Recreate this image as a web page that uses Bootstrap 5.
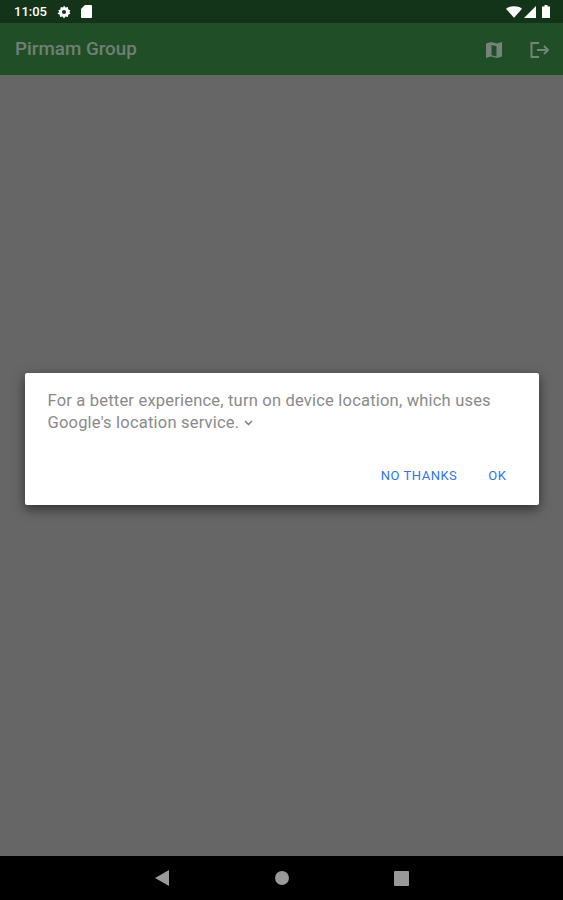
<!DOCTYPE html>
<html lang="en">
<head>
  <meta charset="UTF-8">
  <meta name="viewport" content="width=device-width, initial-scale=1.0">
  <title>Pirmam Group</title>
  <link href="https://cdn.jsdelivr.net/npm/bootstrap@5.3.0/dist/css/bootstrap.min.css" rel="stylesheet">
  <style>
    html, body { height: 100%; }
    body { font-family: Roboto, "Liberation Sans", sans-serif; background: #666666; overflow: hidden; }
    .app-frame { height: 900px; }
    .status-strip { height: 23px; background: #14341a; color: #fff; font-size: 13px; font-weight: 500; padding: 0 13px 0 14px; }
    .status-left { gap: 10px; }
    .status-right { gap: 2px; }
    .app-bar { height: 52px; background: #204f27; padding: 1px 12px 0 15px; box-shadow: 0 1px 2px rgba(0,0,0,.35); }
    .app-title { color: #717f74; font-size: 18.8px; font-weight: 500; margin: 0; }
    .bar-icons { gap: 25px; }
    .scrim-area { background: #666666; }
    .dialog-box { width: 514px; height: 132px; background: #fff; border-radius: 2px; margin-top: 298px; box-shadow: 0 4px 12px rgba(0,0,0,.55); padding: 17px 22px 0 23px; }
    .dialog-copy { color: #8a8a8a; font-size: 16.5px; line-height: 21.5px; margin: 0; letter-spacing: .2px; }
    .dialog-btn { color: #3077de; font-size: 13px; font-weight: 400; letter-spacing: .04em; background: none; border: 0; padding: 0; line-height: 16px; }
    .dialog-actions { gap: 31px; margin-top: 35px; padding-right: 10px; }
    .nav-strip { height: 44px; background: #000; }
    .nav-inner { gap: 105px; }
  </style>
</head>
<body>
  <div class="app-frame d-flex flex-column">
    <div class="status-strip d-flex align-items-center justify-content-between">
      <div class="status-left d-flex align-items-center">
        <span>11:05</span>
        <svg width="14" height="14" viewBox="0 0 24 24" fill="#fff"><path fill-rule="evenodd" d="M12 1l2.500 3.200 4-.7.9 4 3.600 2-1.800 2.500 1.800 2.500-3.600 2-.9 4-4-.7L12 23l-2.500-3.200-4 .7-.9-4-3.600-2L3.800 12 2 9.500l3.600-2 .9-4 4 .7zM12 8.500a3.500 3.500 0 1 0 0 7 3.500 3.500 0 0 0 0-7z"/></svg>
        <svg width="11" height="13" viewBox="0 0 11 13" fill="#fff"><path d="M4 0h6a1 1 0 0 1 1 1v11a1 1 0 0 1-1 1H1a1 1 0 0 1-1-1V4z"/></svg>
      </div>
      <div class="status-right d-flex align-items-center">
        <svg width="16" height="12" viewBox="0 0 17 12" fill="#fff"><path d="M0 2.500C2.300.9 5.200 0 8.500 0S14.700.9 17 2.500L8.500 12z"/></svg>
        <svg width="12" height="12" viewBox="0 0 12 12" fill="#fff"><path d="M12 0v12H0z"/></svg>
        <svg width="8" height="13" viewBox="0 0 8 13" fill="#fff" class="ms-1"><path d="M2.500 0h3v1.500H8V13H0V1.500h2.500z"/></svg>
      </div>
    </div>
    <div class="app-bar d-flex align-items-center justify-content-between">
      <h1 class="app-title">Pirmam Group</h1>
      <div class="bar-icons d-flex align-items-center">
        <svg width="20" height="20" viewBox="0 0 20 20" fill="#75837a"><path fill-rule="evenodd" d="M2 3.500l5-1.500 6 1.500 5-1.500v14.500l-5 1.500-6-1.500-5 1.500zM7.500 5v10.200l5 1.200V6.200z"/></svg>
        <svg width="22" height="20" viewBox="0 0 22 20" fill="none" stroke="#75837a" stroke-width="2"><path d="M10 3H2.500v14H10M8 10h11M15 6l4 4-4 4"/></svg>
      </div>
    </div>
    <div class="scrim-area flex-grow-1 d-flex justify-content-center align-items-start">
      <div class="dialog-box">
        <p class="dialog-copy">For a better experience, turn on device location, which uses Google's location service.
          <svg width="9" height="6" viewBox="0 0 9 6" fill="none" stroke="#7d7d7d" stroke-width="1.500"><path d="M1 1l3.500 3.500L8 1"/></svg>
        </p>
        <div class="dialog-actions d-flex justify-content-end">
          <button type="button" class="dialog-btn">NO THANKS</button>
          <button type="button" class="dialog-btn">OK</button>
        </div>
      </div>
    </div>
    <div class="nav-strip d-flex align-items-center justify-content-center">
      <div class="nav-inner d-flex align-items-center">
        <svg width="15" height="16" viewBox="0 0 15 16" fill="#999"><path d="M14 0v16L0 8z"/></svg>
        <svg width="14" height="14" viewBox="0 0 14 14" fill="#999"><circle cx="7" cy="7" r="7"/></svg>
        <svg width="15" height="15" viewBox="0 0 15 15" fill="#999"><rect width="15" height="15" rx="1"/></svg>
      </div>
    </div>
  </div>
  <script src="https://cdn.jsdelivr.net/npm/bootstrap@5.3.0/dist/js/bootstrap.bundle.min.js"></script>
</body>
</html>
